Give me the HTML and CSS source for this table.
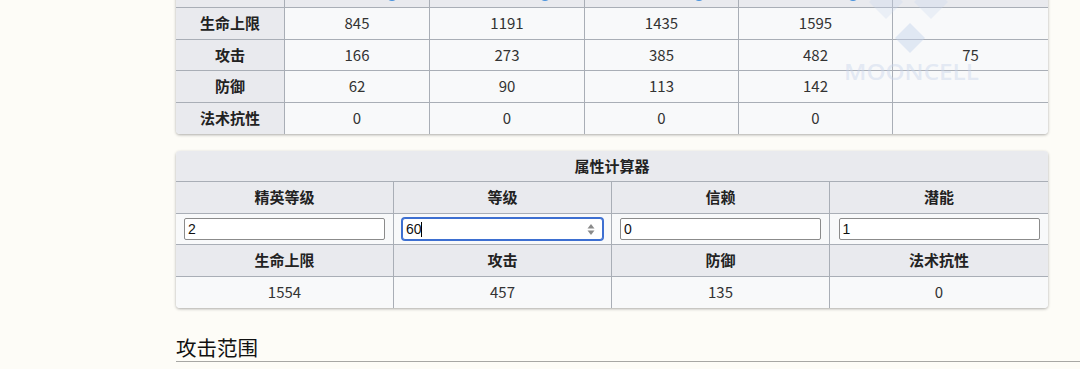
FILE: index.html
```html
<!DOCTYPE html>
<html lang="zh-CN">
<head>
<meta charset="utf-8">
<title>属性</title>
<link rel="stylesheet" href="styles.css">
</head>
<body>
<main class="content">
  <div class="stats-wrap">
    <table class="wikitable stats">
      <colgroup>
        <col class="c-label"><col class="c-a"><col class="c-b"><col class="c-c"><col class="c-d"><col class="c-e">
      </colgroup>
      <thead>
        <tr>
          <th class="corner-tl"></th>
          <th>精英0 1级 <span class="qicon">?</span></th>
          <th>精英0 满级 <span class="qicon">?</span></th>
          <th>精英1 满级 <span class="qicon">?</span></th>
          <th>精英2 满级 <span class="qicon">?</span></th>
          <th class="corner-tr">信赖加成上限</th>
        </tr>
      </thead>
      <tbody>
        <tr><th>生命上限</th><td>845</td><td>1191</td><td>1435</td><td>1595</td><td></td></tr>
        <tr><th>攻击</th><td>166</td><td>273</td><td>385</td><td>482</td><td>75</td></tr>
        <tr><th>防御</th><td>62</td><td>90</td><td>113</td><td>142</td><td></td></tr>
        <tr class="lastrow"><th>法术抗性</th><td>0</td><td>0</td><td>0</td><td>0</td><td></td></tr>
      </tbody>
    </table>
    <div class="watermark" aria-hidden="true">
      <svg width="150" height="110" viewBox="0 0 150 110">
        <polygon points="45,6 62,23 45,40 28,23" fill="#c9d6ee" fill-opacity="0.3"/>
        <polygon points="90,6 107,23 90,40 73,23" fill="#c9d6ee" fill-opacity="0.3"/>
        <polygon points="69,44 84,59 69,74 54,59" fill="#c4d2ec" fill-opacity="0.45"/>
        <text x="3" y="101" textLength="135" lengthAdjust="spacingAndGlyphs" class="wm-text">MOONCELL</text>
      </svg>
    </div>
  </div>

  <table class="wikitable calc">
    <thead>
      <tr><th colspan="4" class="title">属性计算器</th></tr>
    </thead>
    <tbody>
      <tr><th>精英等级</th><th>等级</th><th>信赖</th><th>潜能</th></tr>
      <tr class="inputs">
        <td><input class="field" type="text" value="2"></td>
        <td><span class="field-wrap"><input class="field focused" type="text" value="60"><span class="caret"></span><svg class="spin" width="8" height="13" viewBox="0 0 8 13"><path d="M4 1 L7.5 5.5 L0.5 5.5 Z" fill="#8a8a8a"/><path d="M0.5 7.5 L7.5 7.5 L4 12 Z" fill="#8a8a8a"/></svg></span></td>
        <td><input class="field" type="text" value="0"></td>
        <td><input class="field" type="text" value="1"></td>
      </tr>
      <tr><th>生命上限</th><th>攻击</th><th>防御</th><th>法术抗性</th></tr>
      <tr class="lastrow"><td>1554</td><td>457</td><td>135</td><td>0</td></tr>
    </tbody>
  </table>

  <h2 class="section-title">攻击范围</h2>
</main>
</body>
</html>
```

FILE: styles.css
```css
html, body {
  margin: 0;
  padding: 0;
}
body {
  background: #fdfcf7;
  font-family: "Noto Sans CJK SC", "Noto Sans", sans-serif;
  color: #222;
  overflow: hidden;
}
.content {
  margin-left: 176px;
}
.stats-wrap {
  position: relative;
  width: 872px;
  margin-top: -24px;
}
.wikitable {
  width: 872px;
  table-layout: fixed;
  border-collapse: separate;
  border-spacing: 0;
  background: #f8f9fa;
  border-radius: 4px;
  box-shadow: 0 1px 3px rgba(0, 0, 0, 0.32);
  font-size: 15px;
  text-align: center;
}
.wikitable th,
.wikitable td {
  padding: 0;
  height: 31.5px;
  box-sizing: border-box;
  border-right: 1px solid #a9aeb6;
  border-bottom: 1px solid #a9aeb6;
  line-height: 20px;
  vertical-align: middle;
}
.wikitable th {
  background: #e9eaee;
  font-weight: bold;
  color: #222;
}
.wikitable td {
  background: #f8f9fa;
  font-weight: normal;
  color: #333;
}
.wikitable tr > :last-child {
  border-right: none;
}
.wikitable .lastrow > th,
.wikitable .lastrow > td {
  border-bottom: none;
}
.stats thead th {
  height: 32px;
  vertical-align: bottom;
  padding-bottom: 6px;
  color: #555;
}
.c-label { width: 109px; }
.c-a { width: 145px; }
.c-b { width: 155px; }
.c-c { width: 154px; }
.c-d { width: 154px; }
.c-e { width: 155px; }
.corner-tl { border-top-left-radius: 4px; }
.corner-tr { border-top-right-radius: 4px; }
.wikitable .lastrow > :first-child { border-bottom-left-radius: 4px; }
.wikitable .lastrow > :last-child { border-bottom-right-radius: 4px; }
.qicon {
  display: inline-block;
  width: 12px;
  height: 12px;
  border-radius: 50%;
  background: #4a93dc;
  color: #fff;
  font-size: 9px;
  line-height: 12px;
  vertical-align: -1px;
}
.watermark {
  position: absolute;
  left: 665px;
  top: 3px;
  pointer-events: none;
}
.wm-text {
  font-family: "Open Sans", sans-serif;
  font-weight: 600;
  font-size: 22px;
  fill: #c9d5ec;
  fill-opacity: 0.45;
}
.calc {
  margin-top: 17px;
}
.calc thead th {
  border-top-left-radius: 4px;
  border-top-right-radius: 4px;
}
.calc .title {
  height: 31px;
}
.field-wrap {
  position: relative;
  display: inline-block;
  vertical-align: middle;
}
.field {
  box-sizing: border-box;
  width: 201px;
  height: 22px;
  margin: 0;
  padding: 1px 3px;
  border: 1px solid #8b8b8b;
  border-radius: 2px;
  background: #fff;
  font-family: "Liberation Sans", Arial, sans-serif;
  font-size: 14px;
  color: #111;
  vertical-align: middle;
  outline: none;
}
.field.focused {
  border-color: #3d6fd1;
  box-shadow: 0 0 0 1px #3d6fd1;
  border-radius: 3px;
}
.caret {
  position: absolute;
  left: 19px;
  top: 4px;
  width: 1px;
  height: 15px;
  background: #000;
}
.spin {
  position: absolute;
  right: 8px;
  top: 5px;
}
.section-title {
  margin: 25px 0 0;
  font-family: "Noto Sans CJK SC", serif;
  font-weight: normal;
  font-size: 20.5px;
  line-height: 28px;
  color: #111;
  border-bottom: 1px solid #a7a7a4;
}
```
